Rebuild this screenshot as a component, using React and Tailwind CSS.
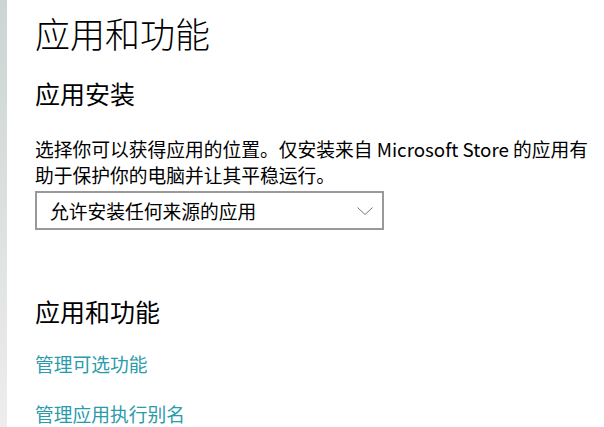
import React from 'react';

const cjk = { fontFamily: '"Noto Sans CJK SC", "Noto Sans", sans-serif' };

export default function App() {
  return (
    <div className="flex w-[604px] h-[427px] bg-white overflow-hidden" style={cjk}>
      {/* window edge */}
      <div className="w-[7px] shrink-0 bg-gradient-to-b from-[#cbd5d3] to-[#ededed]" />

      <div className="flex-1 pl-[28px] text-black">
        <h1 className="pt-[10px] text-[35px] leading-[46px] font-light">应用和功能</h1>

        <h2 className="mt-[19px] text-[25px] leading-[36px] font-normal">应用安装</h2>

        <p className="mt-[25px] text-[18.75px] leading-[26px] w-[560px]">
          选择你可以获得应用的位置。仅安装来自 Microsoft Store 的应用有助于保护你的电脑并让其平稳运行。
        </p>

        <div className="mt-[3px] w-[349px] h-[39px] border-2 border-[#999999] flex items-center justify-between pl-[13px] pr-[9px]">
          <span className="text-[18.75px] leading-[26px]">允许安装任何来源的应用</span>
          <svg width="16" height="8" viewBox="0 0 16 8" fill="none">
            <polyline points="0.5,0.5 8,7.5 15.5,0.5" stroke="#7a7a7a" strokeWidth="1" />
          </svg>
        </div>

        <h2 className="mt-[63px] text-[25px] leading-[36px] font-normal">应用和功能</h2>

        <a className="block mt-[22px] text-[18.75px] leading-[26px] text-[#2a9bab]">管理可选功能</a>
        <a className="block mt-[24px] text-[18.75px] leading-[26px] text-[#2a9bab]">管理应用执行别名</a>
      </div>
    </div>
  );
}
